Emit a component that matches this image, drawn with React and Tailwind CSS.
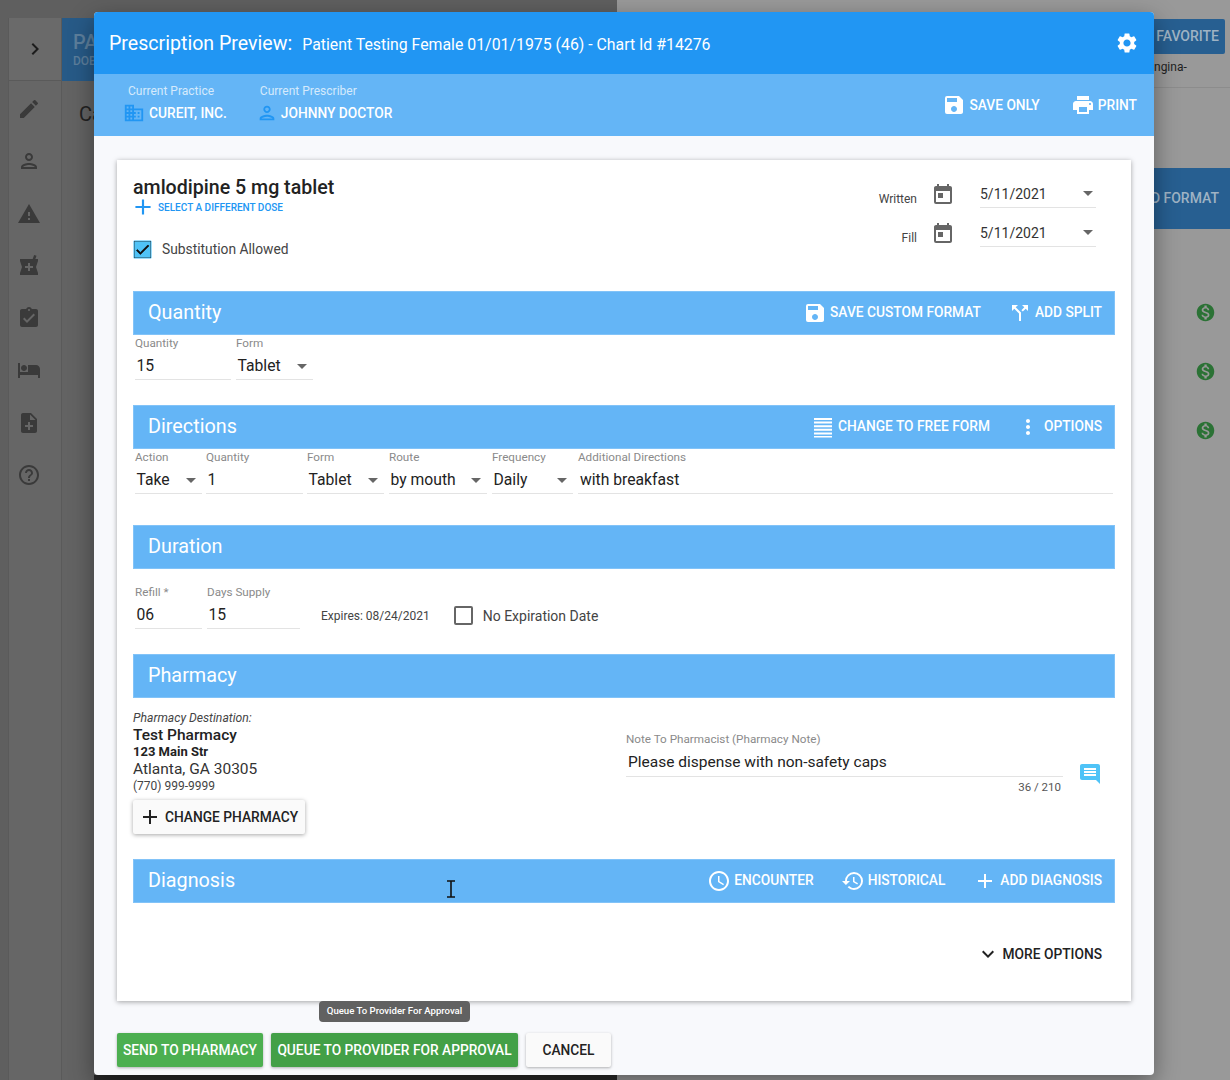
import {
  MdAdd,
  MdAccessTime,
  MdArrowDropDown,
  MdAssignmentTurnedIn,
  MdCallSplit,
  MdCheck,
  MdChevronRight,
  MdEdit,
  MdExpandMore,
  MdHelpOutline,
  MdHistory,
  MdHotel,
  MdLocalPharmacy,
  MdMonetizationOn,
  MdMoreVert,
  MdNoteAdd,
  MdOutlineDomain,
  MdOutlinePerson,
  MdPrint,
  MdSave,
  MdSettings,
  MdToday,
  MdWarning,
} from "react-icons/md";

function Backdrop() {
  return (
    <div className="flex h-[1080px] overflow-hidden">
      <div className="w-[617px] bg-[#5f5f5f] pt-[18px] flex">
        <div className="ml-[8px] w-[54px] h-full bg-[#666666] border-x border-[#5a5a5a] text-[#3a3a3a] flex flex-col">
          <div className="h-[63px] w-full bg-[#6a6a6a] border-b border-[#5a5a5a] flex items-center justify-center">
            <MdChevronRight size={24} className="text-[#1c1c1c]" />
          </div>
          <div className="flex flex-col items-center gap-[28.3px] pt-[16px] pr-[12px]">
            <MdEdit size={24} />
            <MdOutlinePerson size={24} />
            <MdWarning size={24} />
            <MdLocalPharmacy size={24} />
            <MdAssignmentTurnedIn size={24} />
            <MdHotel size={24} />
            <MdNoteAdd size={24} />
            <MdHelpOutline size={24} />
          </div>
        </div>
        <div className="flex-1 bg-[#636363]">
          <div className="h-[63px] bg-[#275a87] text-[#5d7f9c] pl-[11px] pt-[12px] font-medium">
            <p className="text-[20px] leading-[24px]">PA</p>
            <p className="text-[12px] leading-[14px]">DOB</p>
          </div>
          <p className="text-[20px] text-[#222] pl-[17px] pt-[18px]">Ca</p>
        </div>
      </div>
      <div className="flex-1 bg-[#999999] flex flex-col items-end">
        <div className="mt-[19px] mr-[5px] w-[80px] h-[35px] bg-[#275f91] rounded-[2px] text-[#9fb3c4] text-[14px] font-medium flex items-center justify-end pr-[6px]">
          FAVORITE
        </div>
        <div className="w-full h-[34px] border-b border-[#8c8c8c] text-[#222] text-[12px] pl-[537px] pt-[4px]">
          ngina-
        </div>
        <div className="mt-[80px] w-[100px] h-[61px] bg-[#275f91] text-[#9fb3c4] text-[14px] font-medium flex items-center justify-end pr-[11px]">
          D FORMAT
        </div>
        <div className="mt-[73px] mr-[14px] flex flex-col gap-[38px] text-[#2b7235]">
          <MdMonetizationOn size={21} />
          <MdMonetizationOn size={21} />
          <MdMonetizationOn size={21} />
        </div>
      </div>
    </div>
  );
}

function FreeFormIcon({ size }) {
  return (
    <svg viewBox="0 0 24 24" width={size} height={size} fill="currentColor">
      <path d="M3 3h18v2H3zM3 6.6h18v2H3zM3 10.2h18v2H3zM3 13.8h18v2H3zM3 17.4h18v2H3zM3 21h18v1.6H3z" />
    </svg>
  );
}

function BarAction({ icon: Icon, label, className = "" }) {
  return (
    <span className={`flex items-center gap-[3px] text-[13.75px] font-medium text-white ${className}`}>
      <Icon size={24} />
      {label}
    </span>
  );
}

function SectionBar({ title, children, className = "" }) {
  return (
    <div
      className={`h-[44px] bg-[#64b5f6] border border-[#82c3f8] flex items-center justify-between pl-[14px] pr-[12px] ${className}`}
    >
      <h2 className="text-[19.8px] text-white">{title}</h2>
      <div className="flex items-center pb-[1px]">{children}</div>
    </div>
  );
}

function Field({ label, value, width, select }) {
  return (
    <div className={`${width} shrink-0 border-b border-[#e3e3e3]`}>
      <p className="text-[11.7px] leading-[14px] text-[#8a8a8a]">{label}</p>
      <div className="h-[29px] pt-[2px] pl-[1.5px] flex items-center justify-between text-[15.7px] text-[#222]">
        <span>{value}</span>
        {select && <MdArrowDropDown size={24} className="text-[#666] shrink-0 -mr-[1px]" />}
      </div>
    </div>
  );
}

function DateRow({ label, className = "" }) {
  return (
    <div className={`flex items-center ${className}`}>
      <span className="w-[60px] pr-[1px] text-right text-[12px] text-[#444] pt-[7px]">{label}</span>
      <MdToday size={24} className="ml-[13px] text-[#666]" />
      <div className="ml-[25px] w-[116px] h-[26px] border-b border-[#e3e3e3] flex items-center justify-between text-[14px] text-[#333]">
        <span>5/11/2021</span>
        <MdArrowDropDown size={24} className="text-[#666] -mt-[4px] -mr-[4px]" />
      </div>
    </div>
  );
}

export default function App() {
  return (
    <div className="relative w-[1230px] h-[1080px] overflow-hidden font-[Roboto,sans-serif]">
      <Backdrop />
      <div className="absolute left-[94px] top-[1075px] w-[523px] h-[5px] bg-[#2a2a2a]" />

      <div className="absolute left-[94px] top-[12px] w-[1060px] h-[1063px] rounded-[4px] overflow-hidden bg-[#f8f9fc] shadow-[0_8px_24px_rgba(0,0,0,0.4)]">
        <div className="h-[62px] bg-[#2196f3] flex items-center justify-between pl-[15px] pr-[15px] text-white">
          <div className="flex items-baseline gap-[10px] pt-[2px]">
            <h1 className="text-[19.6px]">Prescription Preview:</h1>
            <span className="text-[15.85px]">Patient Testing Female 01/01/1975 (46) - Chart Id #14276</span>
          </div>
          <MdSettings size={24} />
        </div>

        <div className="h-[62px] bg-[#64b5f6] flex items-center justify-between pl-[29px] pr-[17px]">
          <div className="flex gap-[33px] pb-[2px]">
            <div>
              <p className="text-[12px] leading-[14px] text-[#d5eafc] pl-[5px] mb-[4px]">Current Practice</p>
              <p className="flex items-center gap-[4px] text-[13.75px] font-medium text-white">
                <MdOutlineDomain size={22} className="text-[#2196f3]" /> CUREIT, INC.
              </p>
            </div>
            <div>
              <p className="text-[12px] leading-[14px] text-[#d5eafc] mb-[4px]">Current Prescriber</p>
              <p className="flex items-center gap-[3px] -ml-[4px] text-[13.75px] font-medium text-white">
                <MdOutlinePerson size={22} className="text-[#2196f3]" /> JOHNNY DOCTOR
              </p>
            </div>
          </div>
          <div className="flex items-center">
            <BarAction icon={MdSave} label="SAVE ONLY" className="mr-[31px]" />
            <BarAction icon={MdPrint} label="PRINT" />
          </div>
        </div>

        <div className="px-[23px] pt-[24px]">
          <div className="h-[841px] bg-white shadow-[0_1px_5px_rgba(0,0,0,0.35)] px-[16px] pt-[15px]">
            <div className="h-[116px] flex justify-between">
              <div>
                <h3 className="text-[19.6px] leading-[25px] font-medium text-[#222]">amlodipine 5 mg tablet</h3>
                <p className="flex items-center gap-[2px] text-[10px] font-medium text-[#2196f3] h-[14px]">
                  <MdAdd size={26} className="-ml-[3px]" /> SELECT A DIFFERENT DOSE
                </p>
                <div className="mt-[25px] flex items-center gap-[10px]">
                  <span className="w-[19px] h-[19px] bg-[#4fc3f7] border border-[#9ddcf9] rounded-[2px] flex items-center justify-center">
                    <MdCheck size={17} stroke="currentColor" strokeWidth={1} className="text-[#111]" />
                  </span>
                  <span className="text-[13.8px] text-[#444]">Substitution Allowed</span>
                </div>
              </div>
              <div className="pr-[19px] pt-[7px]">
                <DateRow label="Written" />
                <DateRow label="Fill" className="mt-[13px]" />
              </div>
            </div>

            <SectionBar title="Quantity">
              <BarAction icon={MdSave} label="SAVE CUSTOM FORMAT" className="mr-[27px]" />
              <BarAction icon={MdCallSplit} label="ADD SPLIT" />
            </SectionBar>
            <div className="flex gap-[5px] pl-[2px] mt-[1px]">
              <Field label="Quantity" value="15" width="w-[96px]" />
              <Field label="Form" value="Tablet" width="w-[77px]" select />
            </div>

            <SectionBar title="Directions" className="mt-[25px]">
              <BarAction icon={FreeFormIcon} label="CHANGE TO FREE FORM" className="mr-[26px]" />
              <BarAction icon={MdMoreVert} label="OPTIONS" className="[&>svg]:mr-[1px]" />
            </SectionBar>
            <div className="flex gap-[4px] pl-[2px] pr-[2px] mt-[1px]">
              <Field label="Action" value="Take" width="w-[67px]" select />
              <Field label="Quantity" value="1" width="w-[97px]" />
              <Field label="Form" value="Tablet" width="w-[77px]" select />
              <Field label="Route" value="by mouth" width="w-[98px] ml-[1px]" select />
              <Field label="Frequency" value="Daily" width="w-[81px] ml-[1px]" select />
              <div className="flex-1 ml-[1px] border-b border-[#e3e3e3]">
                <p className="text-[11.7px] leading-[14px] text-[#8a8a8a]">Additional Directions</p>
                <div className="h-[29px] pt-[2px] pl-[2px] flex items-center text-[15.7px] text-[#222]">with breakfast</div>
              </div>
            </div>

            <SectionBar title="Duration" className="mt-[31px]" />
            <div className="flex items-end pl-[2px] mt-[16px]">
              <Field label="Refill *" value="06" width="w-[67px]" />
              <div className="ml-[5px]">
                <Field label="Days Supply" value="15" width="w-[93px]" />
              </div>
              <span className="ml-[21px] mb-[4px] text-[12px] text-[#444]">Expires: 08/24/2021</span>
              <span className="ml-[24px] mb-[4px] w-[19px] h-[19px] border-2 border-[#666] rounded-[2px]" />
              <span className="ml-[10px] mb-[2px] text-[14px] text-[#444]">No Expiration Date</span>
            </div>

            <SectionBar title="Pharmacy" className="mt-[25px]" />
            <div className="h-[161px] flex">
              <div className="w-[493px] pt-[13px]">
                <p className="text-[12.2px] leading-[14px] italic text-[#444]">Pharmacy Destination:</p>
                <p className="text-[15.5px] leading-[19px] font-medium text-[#222] mt-[1px]">Test Pharmacy</p>
                <p className="text-[13px] leading-[13px] font-bold text-[#222]">123 Main Str</p>
                <p className="text-[15.5px] leading-[23px] text-[#333]">Atlanta, GA 30305</p>
                <p className="text-[12px] leading-[11px] text-[#444]">(770) 999-9999</p>
                <button className="mt-[8px] h-[34px] w-[172px] bg-[#fafafa] rounded-[2px] shadow-[0_1px_4px_rgba(0,0,0,0.35)] flex items-center gap-[3px] pl-[5px] text-[13.75px] font-medium text-[#222]">
                  <MdAdd size={24} /> CHANGE PHARMACY
                </button>
              </div>
              <div className="w-[437px] pt-[34px]">
                <p className="text-[11.7px] leading-[14px] text-[#8a8a8a]">Note To Pharmacist (Pharmacy Note)</p>
                <div className="h-[31px] pt-[3px] pl-[2px] border-b border-[#e3e3e3] flex items-center text-[15.5px] text-[#222]">
                  Please dispense with non-safety caps
                </div>
                <p className="text-right text-[11.5px] text-[#555] pr-[2px] mt-[2px]">36 / 210</p>
              </div>
              <svg viewBox="0 0 24 24" className="ml-[15px] mt-[64px] w-[24px] h-[24px] fill-[#4fc3f7]">
                <path d="M22 4c0-1.1-.9-2-2-2H4c-1.1 0-2 .9-2 2v12c0 1.1.9 2 2 2h14l4 4V4zm-4 10H6v-2h12v2zm0-3H6V9h12v2zm0-3H6V6h12v2z" />
              </svg>
            </div>

            <SectionBar title="Diagnosis">
              <BarAction icon={MdAccessTime} label="ENCOUNTER" className="mr-[27px]" />
              <BarAction icon={MdHistory} label="HISTORICAL" className="mr-[28px]" />
              <BarAction icon={MdAdd} label="ADD DIAGNOSIS" />
            </SectionBar>
            <div className="flex justify-end pr-[13px] mt-[39px]">
              <span className="flex items-center gap-[3px] text-[13.75px] font-medium text-[#222]">
                <MdExpandMore size={24} /> MORE OPTIONS
              </span>
            </div>
          </div>

          <div className="flex gap-[8px] mt-[32px]">
            <button className="h-[34px] w-[146px] bg-[#4caf50] rounded-[2px] text-[13.75px] font-medium text-white shadow-[0_1px_3px_rgba(0,0,0,0.3)]">
              SEND TO PHARMACY
            </button>
            <button className="h-[34px] w-[247px] bg-[#43a047] rounded-[2px] text-[13.75px] font-medium text-white shadow-[0_1px_3px_rgba(0,0,0,0.3)]">
              QUEUE TO PROVIDER FOR APPROVAL
            </button>
            <button className="h-[34px] w-[85px] bg-[#fafafa] rounded-[2px] text-[13.75px] font-medium text-[#222] shadow-[0_1px_3px_rgba(0,0,0,0.3)]">
              CANCEL
            </button>
          </div>
        </div>

        <div className="absolute left-[225px] top-[989px] w-[151px] h-[21px] bg-[#616161] rounded-[4px] flex items-center justify-center text-[9.6px] font-medium text-white">
          Queue To Provider For Approval
        </div>

        {/* text cursor over the diagnosis bar */}
        <svg viewBox="0 0 10 18" className="absolute left-[352px] top-[868px] w-[10px] h-[18px]" fill="none">
          <path d="M1 1h8M1 17h8M5 1v16" stroke="#111" strokeWidth="1.6" />
        </svg>
      </div>
    </div>
  );
}
